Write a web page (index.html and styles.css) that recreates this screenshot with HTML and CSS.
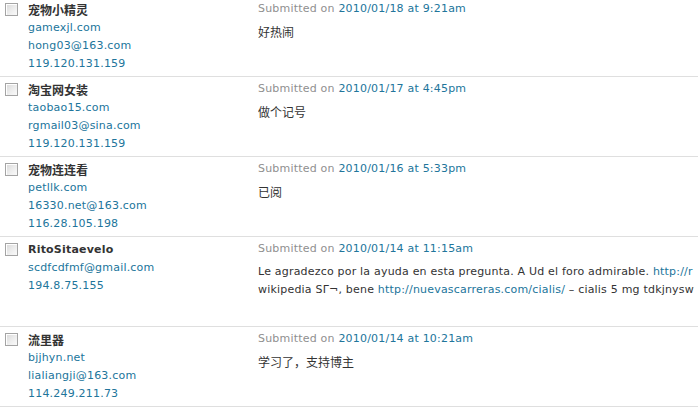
FILE: index.html
```html
<!DOCTYPE html>
<html lang="zh">
<head>
<meta charset="utf-8">
<link rel="stylesheet" href="styles.css">
</head>
<body>
<div class="list">
  <div class="row">
    <div class="check"><span class="box"></span></div>
    <div class="author">
      <div class="name zh">宠物小精灵</div>
      <a class="line">gamexjl.com</a>
      <a class="line">hong03@163.com</a>
      <a class="line">119.120.131.159</a>
    </div>
    <div class="comment">
      <div class="meta">Submitted on <a>2010/01/18 at 9:21am</a></div>
      <p class="text zh">好热闹</p>
    </div>
  </div>
  <div class="row">
    <div class="check"><span class="box"></span></div>
    <div class="author">
      <div class="name zh">淘宝网女装</div>
      <a class="line">taobao15.com</a>
      <a class="line">rgmail03@sina.com</a>
      <a class="line">119.120.131.159</a>
    </div>
    <div class="comment">
      <div class="meta">Submitted on <a>2010/01/17 at 4:45pm</a></div>
      <p class="text zh">做个记号</p>
    </div>
  </div>
  <div class="row">
    <div class="check"><span class="box"></span></div>
    <div class="author">
      <div class="name zh">宠物连连看</div>
      <a class="line">petllk.com</a>
      <a class="line">16330.net@163.com</a>
      <a class="line">116.28.105.198</a>
    </div>
    <div class="comment">
      <div class="meta">Submitted on <a>2010/01/16 at 5:33pm</a></div>
      <p class="text zh">已阅</p>
    </div>
  </div>
  <div class="row">
    <div class="check"><span class="box"></span></div>
    <div class="author">
      <div class="name">RitoSitaevelo</div>
      <a class="line">scdfcdfmf@gmail.com</a>
      <a class="line">194.8.75.155</a>
    </div>
    <div class="comment">
      <p class="meta">Submitted on <a>2010/01/14 at 11:15am</a></p>
      <p class="text long">Le agradezco por la ayuda en esta pregunta. A Ud el foro admirable. <a>http://r</a><br>wikipedia SΓ¬, bene <a>http://nuevascarreras.com/cialis/</a> – cialis 5 mg tdkjnysw</p>
    </div>
  </div>
  <div class="row">
    <div class="check"><span class="box"></span></div>
    <div class="author">
      <div class="name zh">流里器</div>
      <a class="line">bjjhyn.net</a>
      <a class="line">lialiangji@163.com</a>
      <a class="line">114.249.211.73</a>
    </div>
    <div class="comment">
      <div class="meta">Submitted on <a>2010/01/14 at 10:21am</a></div>
      <p class="text zh">学习了，支持博主</p>
    </div>
  </div>
</div>
</body>
</html>
```

FILE: styles.css
```css
html, body {
  margin: 0;
  padding: 0;
  background: #fff;
  overflow: hidden;
}
body {
  font-family: "DejaVu Sans", Verdana, "Noto Sans CJK SC", sans-serif;
  font-size: 11px;
  letter-spacing: 0.2px;
  color: #333;
}
.list {
  margin-top: -3px;
}
.row {
  display: grid;
  grid-template-columns: 28px 230px 1fr;
  padding: 3px 0 3px;
  border-bottom: 1px solid #dfdfdf;
}
.check {
  padding: 3px 0 0 5px;
}
.box {
  display: block;
  width: 11px;
  height: 11px;
  border: 1px solid #a4a4a4;
  background: linear-gradient(135deg, #d8d8d8 0%, #efefef 60%, #fafafa 100%);
  box-shadow: inset 1px 1px 0 #fff;
}
.author {
  display: flex;
  flex-direction: column;
}
.name {
  line-height: 19px;
  font-weight: bold;
  color: #333;
}
.line {
  line-height: 18px;
  color: #21759b;
  text-decoration: none;
}
a {
  color: #21759b;
  text-decoration: none;
}
.zh {
  font-family: "Noto Sans CJK SC", "DejaVu Sans", sans-serif;
  font-size: 12px;
  letter-spacing: 0;
}
.comment {
  min-width: 0;
  overflow: hidden;
}
.meta {
  margin: 0;
  line-height: 18px;
  color: #8f8f8f;
}
.text {
  margin: 5px 0 24px;
  line-height: 18px;
  color: #333;
}
.long {
  white-space: nowrap;
}
```
